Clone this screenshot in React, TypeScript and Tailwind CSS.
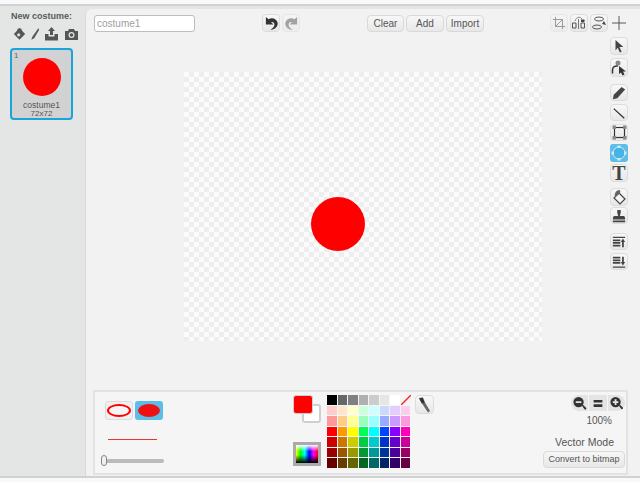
const palette = [
  ["bg-[#000000]", "bg-[#666666]", "bg-[#808080]", "bg-[#b0b0b0]", "bg-[#cccccc]", "bg-[#e6e6e6]", "bg-[#ffffff]", "none"],
  ["bg-[#ffcccc]", "bg-[#ffe5cc]", "bg-[#ffffcc]", "bg-[#ccffdd]", "bg-[#ccffff]", "bg-[#ccd9ff]", "bg-[#e5ccff]", "bg-[#ffccee]"],
  ["bg-[#ff9999]", "bg-[#ffcc88]", "bg-[#ffff99]", "bg-[#99ffbb]", "bg-[#99ffff]", "bg-[#99aaff]", "bg-[#cc99ff]", "bg-[#ff99dd]"],
  ["bg-[#ff0000]", "bg-[#ff9900]", "bg-[#ffff00]", "bg-[#00ff55]", "bg-[#00ffff]", "bg-[#0044ff]", "bg-[#8800ff]", "bg-[#ff00bb]"],
  ["bg-[#cc0000]", "bg-[#cc7700]", "bg-[#cccc00]", "bg-[#00cc44]", "bg-[#00cccc]", "bg-[#0033cc]", "bg-[#6600cc]", "bg-[#cc0099]"],
  ["bg-[#990000]", "bg-[#995500]", "bg-[#999900]", "bg-[#009933]", "bg-[#009999]", "bg-[#003399]", "bg-[#4c0099]", "bg-[#990066]"],
  ["bg-[#660000]", "bg-[#663c00]", "bg-[#666600]", "bg-[#006622]", "bg-[#006666]", "bg-[#002266]", "bg-[#330066]", "bg-[#660044]"],
];

function TextButton({ label, className }: { label: string; className: string }) {
  return (
    <button className={`h-[17px] rounded-[4px] border border-[#d9d9d9] bg-gradient-to-b from-[#f7f7f7] to-[#e8e8e8] leading-none text-[#555] ${className}`}>
      {label}
    </button>
  );
}

function IconButton({ children, className = "", dim = false }: { children: React.ReactNode; className?: string; dim?: boolean }) {
  return (
    <div className={`flex w-[18px] items-center justify-center rounded-[4px] border border-[#dcdcdc] bg-gradient-to-b from-[#f8f8f8] to-[#e7e7e7] ${dim ? "opacity-50" : ""} ${className}`}>
      {children}
    </div>
  );
}

function Icon({ d, size = 14, fill = "#444", stroke = "none", sw = 1 }: { d: string; size?: number; fill?: string; stroke?: string; sw?: number }) {
  return (
    <svg width={size} height={size} viewBox="0 0 16 16">
      <path d={d} fill={fill} stroke={stroke} strokeWidth={sw} />
    </svg>
  );
}

function Sidebar() {
  return (
    <div className="flex w-[85px] shrink-0 flex-col pl-[10px] pt-[1px]">
      <div className="pl-[1px] text-[9px] font-bold leading-[12px] text-[#5a5a5a]">New costume:</div>
      <div className="mt-[4px] flex h-[16px] items-center pl-[3px]">
        <svg width="13" height="16" viewBox="0 0 16 16">
          <path d="M8 1L15 8L8 15L1 8Z" fill="#555" />
          <circle cx="8" cy="4" r="3" fill="#555" />
          <circle cx="7" cy="9" r="2" fill="#ddd" />
        </svg>
        <svg width="10" height="16" viewBox="0 0 12 16" className="ml-[4px]">
          <path d="M10 1L3 11L1.5 15L5 13L11 3Z" fill="#555" />
        </svg>
        <svg width="15" height="16" viewBox="0 0 15 16" className="ml-[4px]">
          <path d="M7.5 1L11 5H9V9H6V5H4Z M1 8H4.5V10.5H10.5V8H14V14.5H1Z" fill="#555" />
        </svg>
        <svg width="15" height="16" viewBox="0 0 15 16" className="ml-[5px]">
          <path d="M1 5H4L5 3H10L11 5H14V14H1Z" fill="#555" />
          <circle cx="7.5" cy="9" r="3" fill="#e5e7e6" />
          <circle cx="7.5" cy="9" r="1.8" fill="#555" />
        </svg>
      </div>
      <div className="relative mt-[6px] flex h-[72px] w-[63px] flex-col items-center rounded-[4px] border-[2px] border-[#1ca3dc] bg-[#d2d2d2]">
        <span className="absolute left-[2px] top-[1px] text-[8px] leading-[10px] text-[#666]">1</span>
        <div className="mt-[8px] h-[38px] w-[38px] shrink-0 rounded-full bg-[#ff0000]" />
        <div className="mt-[4px] text-[8.5px] leading-[10px] text-[#555]">costume1</div>
        <div className="text-[8px] leading-[8px] text-[#555]">72x72</div>
      </div>
    </div>
  );
}

function TopBar() {
  return (
    <div className="flex h-[18px] items-stretch pl-[8px]">
      <div className="mt-[1px] h-[17px] w-[101px] rounded-[3px] border border-[#bdbdbd] bg-white pl-[2px] text-[10px] leading-[15px] text-[#a0a0a0]">costume1</div>
      <div className="ml-[67px] flex gap-[2px]">
        <IconButton>
          <Icon d="M2 1V9H10L7.5 6.5C10 6 11.5 7.5 11 10C10.5 12 9 13 7 14.5C11.5 15 15.5 11 14.5 7C13.5 2.5 8 1 5 3.5Z" size={15} fill="#333" />
        </IconButton>
        <IconButton dim>
          <Icon d="M14 1V9H6L8.5 6.5C6 6 4.5 7.5 5 10C5.5 12 7 13 9 14.5C4.5 15 0.5 11 1.5 7C2.5 2.5 8 1 11 3.5Z" size={15} fill="#555" />
        </IconButton>
      </div>
      <div className="ml-[67px] mt-[1px] flex gap-[2px] text-[10px]">
        <TextButton label="Clear" className="w-[37px]" />
        <TextButton label="Add" className="w-[38px]" />
        <TextButton label="Import" className="w-[38px]" />
      </div>
      <div className="ml-[66px] flex gap-[2px]">
        <IconButton dim>
          <Icon d="M4 1V12H15M1 4H12V15M12 4L4 12" fill="none" stroke="#333" />
        </IconButton>
        <IconButton>
          <svg width="16" height="14" viewBox="0 0 16 14">
            <path d="M7.5 3V13" fill="none" stroke="#777" />
            <path d="M1.5 7H5V12H1.5Z M10 7H13.5V12H10Z" fill="none" stroke="#555" />
            <path d="M4 5C5 1 9 0 11 3" fill="none" stroke="#888" />
            <path d="M10 3.5H13.5V6H10Z" fill="#444" />
          </svg>
        </IconButton>
        <IconButton>
          <svg width="16" height="14" viewBox="0 0 16 14">
            <ellipse cx="8" cy="3" rx="4.5" ry="2" fill="none" stroke="#555" />
            <ellipse cx="6" cy="11" rx="4.5" ry="2" fill="none" stroke="#555" />
            <path d="M13 5L15 9L11 8Z" fill="#444" />
          </svg>
        </IconButton>
        <div className="flex w-[18px] items-center justify-center">
          <Icon d="M8 0V16M0 8H16" fill="none" stroke="#444" />
        </div>
      </div>
    </div>
  );
}

function ToolColumn() {
  return (
    <div className="flex w-[18px] flex-col">
      <IconButton className="h-[18px]">
        <Icon d="M4 1L13 9H8.5L11 14.5L9 15.5L6.5 10L4 13Z" />
      </IconButton>
      <IconButton className="mt-[3px] h-[19px]">
        <svg width="16" height="17" viewBox="0 0 16 17">
          <path d="M1.5 14.5V11C1.5 8 4 6.5 7 7" fill="none" stroke="#333" strokeWidth="1.5" />
          <circle cx="7" cy="4" r="2.5" fill="#888" />
          <path d="M8 7L15 12.5H12L13.5 15.5L11.5 16.5L10 13.5L8 15Z" fill="#333" />
        </svg>
      </IconButton>
      <IconButton className="mt-[7px] h-[17px]">
        <Icon d="M11 1L15 4L6 14L1 15L2 10Z" />
      </IconButton>
      <IconButton className="mt-[3px] h-[17px]">
        <Icon d="M2 3L14 14" fill="none" stroke="#333" sw={1.5} />
      </IconButton>
      <IconButton className="mt-[3px] h-[17px]">
        <svg width="15" height="15" viewBox="0 0 15 15">
          <rect x="2.5" y="2.5" width="10" height="10" fill="none" stroke="#333" strokeWidth="1.2" />
          <rect x="0.5" y="0.5" width="3.5" height="3.5" fill="#888" />
          <rect x="11" y="0.5" width="3.5" height="3.5" fill="#888" />
          <rect x="0.5" y="11" width="3.5" height="3.5" fill="#888" />
          <rect x="11" y="11" width="3.5" height="3.5" fill="#888" />
        </svg>
      </IconButton>
      <div className="mt-[3px] flex h-[18px] w-[18px] items-center justify-center rounded-[3px] bg-[#5cbde8]">
        <svg width="16" height="16" viewBox="0 0 16 16">
          <circle cx="8" cy="8" r="6" fill="#45b4e4" stroke="#cfeaf7" strokeWidth="1" />
          <path d="M6.5 0.5H9.5V3H6.5Z M6.5 13H9.5V15.5H6.5Z M0.5 6.5H3V9.5H0.5Z M13 6.5H15.5V9.5H13Z" fill="#cfeaf7" />
        </svg>
      </div>
      <IconButton className="mt-[2px] h-[18px]">
        <span className="font-['Liberation_Serif',serif] text-[20px] font-bold leading-[18px] text-[#444]">T</span>
      </IconButton>
      <IconButton className="mt-[6px] h-[18px]">
        <svg width="15" height="16" viewBox="0 0 15 16">
          <path d="M7 4L13 10L8 15L2 9Z" fill="#f5f5f5" stroke="#444" strokeWidth="1.2" />
          <path d="M3 8C2 5 4 1 7 1C9 1 8.5 4 7 5" fill="#666" />
        </svg>
      </IconButton>
      <IconButton className="mt-[1px] h-[17px]">
        <Icon d="M6 1H10V4L9 8H13C14.5 8 15 9 15 12H1C1 9 1.5 8 3 8H7L6 4Z M1 13H15V15H1Z" />
      </IconButton>
      <IconButton className="mt-[9px] h-[17px]">
        <Icon d="M1 2H15V3.5H1Z M1 5H9.5V7H1Z M1 8H9.5V10H1Z M1 11H9.5V13H1Z M12.5 4L15 8H13.5V14H11.5V8H10Z" />
      </IconButton>
      <IconButton className="mt-[3px] h-[17px]">
        <Icon d="M1 2H9.5V4H1Z M1 5H9.5V7H1Z M1 8H9.5V10H1Z M11.5 2H13.5V8H15L12.5 12L10 8H11.5Z M1 13H15V14.5H1Z" />
      </IconButton>
    </div>
  );
}

function Canvas() {
  return (
    <div className="relative ml-[98px] mt-[40px] h-[269px] w-[358px] bg-[#fbfbfb] bg-[repeating-conic-gradient(#eeeeee_0%_25%,#fbfbfb_0%_50%)] bg-[length:10px_10px]">
      <div className="absolute left-[127px] top-[125px] h-[54px] w-[54px] rounded-full bg-[#ff0000]" />
    </div>
  );
}

function StrokePanel() {
  return (
    <div className="flex w-[198px] shrink-0 flex-col pl-[10px] pt-[9px]">
      <div className="flex gap-[2px]">
        <div className="flex h-[19px] w-[28px] items-center justify-center rounded-[3px] border border-[#dcdcdc] bg-[#f0f0f0]">
          <div className="h-[13px] w-[24px] rounded-[50%] border-[2px] border-[#ff0000] bg-[#f5f5f5]" />
        </div>
        <div className="flex h-[19px] w-[28px] items-center justify-center rounded-[3px] bg-[#5cbde8]">
          <div className="h-[13px] w-[22px] rounded-[50%] bg-[#ee1111]" />
        </div>
      </div>
      <div className="ml-[3px] mt-[19px] h-[1px] w-[49px] bg-[#ee3333]" />
      <div className="relative -ml-[3px] mt-[19px] h-[4px] w-[62px] rounded-full bg-[#bbbbbb]">
        <div className="absolute -left-[1px] -top-[4px] h-[11px] w-[6px] rounded-[3px] border border-[#888] bg-[#f0f0f0]" />
      </div>
    </div>
  );
}

function ColorPanel() {
  return (
    <div className="flex shrink-0 pt-[3px]">
      <div className="flex w-[34px] flex-col">
        <div className="relative h-[28px]">
          <div className="absolute left-[9px] top-[9px] h-[19px] w-[19px] rounded-[3px] border-[2px] border-[#cfcfcf] bg-white" />
          <div className="absolute left-0 top-0 h-[19px] w-[20px] rounded-[3px] border border-[#cfcfcf] bg-[#ff0000]" />
        </div>
        <div className="mt-[19px] h-[24px] w-[28px] border-[3px] border-[#aaaaaa] bg-[linear-gradient(to_bottom,#fff,transparent_35%,transparent_55%,#000),linear-gradient(to_right,#ff0,#0f0,#0ff,#00f,#f0f,#f00)]" />
      </div>
      <div className="grid h-[73px] w-[83px] grid-cols-8 grid-rows-7 gap-[1px]">
        {palette.flat().map((c, i) =>
          c === "none" ? (
            <svg key={i} width="10" height="10" viewBox="0 0 10 10">
              <path d="M0 10L10 0" stroke="#ff2222" strokeWidth="1.4" />
            </svg>
          ) : (
            <div key={i} className={c} />
          ),
        )}
      </div>
      <IconButton className="ml-[5px] h-[19px] w-[19px]">
        <svg width="15" height="16" viewBox="0 0 15 16">
          <path d="M2 1L6 0.5L7 3.5L5 5L3.5 4.5Z M3.5 4L7 3L8 6L5 7Z" fill="#333" />
          <path d="M5 6.5L8 5.5L13 14L11 15.5Z" fill="#666" />
        </svg>
      </IconButton>
    </div>
  );
}

function ZoomPanel() {
  return (
    <div className="ml-auto flex w-[84px] shrink-0 flex-col items-end pr-[1px] pt-[3px]">
      <div className="flex h-[16px] w-[54px] overflow-hidden rounded-full bg-[#e4e4e4]">
        <div className="flex flex-1 items-center justify-center border-r border-[#f5f5f5]">
          <Icon d="M7 1A5.5 5.5 0 1 0 7 12A5.5 5.5 0 1 0 7 1Z M4 5.5H10V7.5H4Z M10.5 10.5L14 15L15.5 13L12 9.5Z" size={15} fill="#333" />
        </div>
        <div className="flex flex-1 items-center justify-center border-r border-[#f5f5f5]">
          <Icon d="M3 4.5H13V7.5H3Z M3 9.5H13V12.5H3Z" size={14} fill="#333" />
        </div>
        <div className="flex flex-1 items-center justify-center">
          <Icon d="M7 1A5.5 5.5 0 1 0 7 12A5.5 5.5 0 1 0 7 1Z M6 3.5H8V5.5H10V7.5H8V9.5H6V7.5H4V5.5H6Z M10.5 10.5L14 15L15.5 13L12 9.5Z" size={15} fill="#333" />
        </div>
      </div>
      <div className="mr-[13px] mt-[4px] text-[10px] leading-[12px] text-[#555]">100%</div>
      <div className="mr-[11px] mt-[8px] whitespace-nowrap text-[10.5px] leading-[14px] text-[#555]">Vector Mode</div>
      <TextButton label="Convert to bitmap" className="mt-[2px] w-[82px] whitespace-nowrap text-[9px]" />
    </div>
  );
}

export default function App() {
  return (
    <div className="h-[482px] w-[640px] overflow-hidden bg-[#f9f9f9] font-['Liberation_Sans',Arial,sans-serif]">
      <div className="mt-[4px] flex h-[474px] flex-col border-y-[2px] border-[#d0d2d1] bg-[#e4e6e5]">
        <div className="flex flex-1 pt-[3px]">
          <Sidebar />
          <div className="flex min-w-0 flex-1 flex-col rounded-tl-[6px] border-l border-[#d8d8d8] bg-[#f2f2f2] pt-[5px]">
            <TopBar />
            <div className="flex items-start">
              <Canvas />
              <div className="ml-[68px] mt-[5px]">
                <ToolColumn />
              </div>
            </div>
            <div className="mb-[1px] ml-[7px] mt-auto flex h-[85px] w-[535px] border-[2px] border-[#e2e2e2] bg-[#f5f5f5]">
              <StrokePanel />
              <ColorPanel />
              <ZoomPanel />
            </div>
          </div>
        </div>
      </div>
    </div>
  );
}
